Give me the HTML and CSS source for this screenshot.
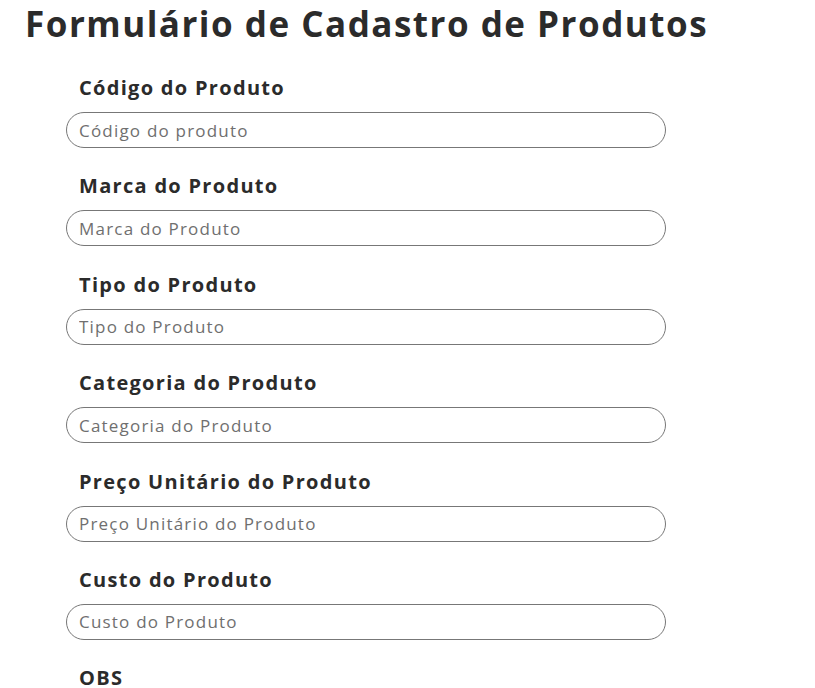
FILE: index.html
```html
<!DOCTYPE html>
<html lang="pt-BR">
<head>
<meta charset="utf-8">
<title>Formulário de Cadastro de Produtos</title>
<link rel="stylesheet" href="styles.css">
</head>
<body>
<h1 class="title">Formulário de Cadastro de Produtos</h1>
<form class="form">
  <div class="field">
    <label class="label" for="codigo">Código do Produto</label>
    <input class="input" id="codigo" type="text" placeholder="Código do produto">
  </div>
  <div class="field">
    <label class="label" for="marca">Marca do Produto</label>
    <input class="input" id="marca" type="text" placeholder="Marca do Produto">
  </div>
  <div class="field">
    <label class="label" for="tipo">Tipo do Produto</label>
    <input class="input" id="tipo" type="text" placeholder="Tipo do Produto">
  </div>
  <div class="field">
    <label class="label" for="categoria">Categoria do Produto</label>
    <input class="input" id="categoria" type="text" placeholder="Categoria do Produto">
  </div>
  <div class="field">
    <label class="label" for="preco">Preço Unitário do Produto</label>
    <input class="input" id="preco" type="text" placeholder="Preço Unitário do Produto">
  </div>
  <div class="field">
    <label class="label" for="custo">Custo do Produto</label>
    <input class="input" id="custo" type="text" placeholder="Custo do Produto">
  </div>
  <div class="field">
    <label class="label" for="obs">OBS</label>
    <textarea class="input textarea" id="obs" placeholder="OBS"></textarea>
  </div>
</form>
</body>
</html>
```
FILE: styles.css
```css
* { box-sizing: border-box; }
html, body { margin: 0; padding: 0; background: #fff; }
body {
  font-family: "Open Sans", "Liberation Sans", sans-serif;
  color: #2b2b2b;
  overflow: hidden;
  height: 688px;
}
.title {
  margin: 0;
  padding: 2px 0 0 25px;
  font-size: 35px;
  font-weight: 700;
  letter-spacing: 1.5px;
  line-height: 44px;
  color: #2b2b2b;
}
.form {
  display: flex;
  flex-direction: column;
  gap: 26.4px;
  padding: 30px 0 0 66px;
  width: 666px;
}
.field {
  display: flex;
  flex-direction: column;
  gap: 12px;
}
.label {
  padding-left: 13px;
  font-size: 20px;
  font-weight: 700;
  letter-spacing: 1.3px;
  line-height: 24px;
}
.input {
  width: 600px;
  height: 36px;
  border: 1px solid #777;
  border-radius: 18px;
  padding: 0 12px;
  font-family: inherit;
  font-size: 17px;
  letter-spacing: 1.2px;
  color: #333;
  outline: none;
  background: #fff;
}
.input::placeholder { color: #6f6f6f; }
.textarea { height: 80px; resize: none; padding-top: 6px; }
```
